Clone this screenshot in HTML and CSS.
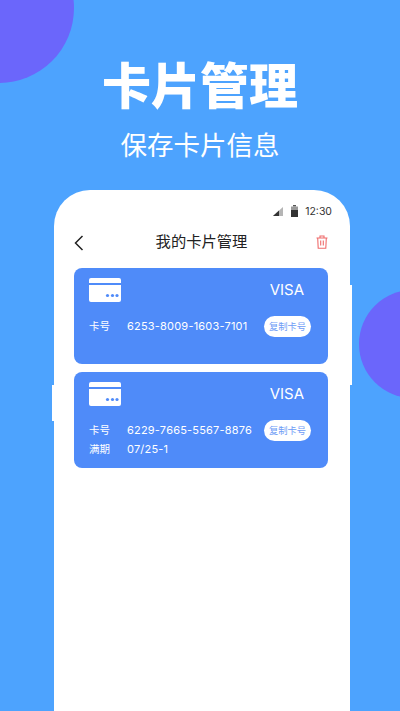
FILE: index.html
```html
<!DOCTYPE html>
<html lang="zh">
<head>
<meta charset="utf-8">
<title>卡片管理</title>
<link rel="stylesheet" href="styles.css">
</head>
<body>
<div class="backdrop">
  <div class="blob blob-top"></div>
  <div class="blob blob-right"></div>
</div>
<header class="hero">
  <h1>卡片管理</h1>
  <p>保存卡片信息</p>
</header>
<main class="phone">
  <span class="side side-left"></span>
  <span class="side side-right"></span>
  <div class="status">
    <svg class="sig" viewBox="0 0 10 10"><path d="M0 10 10 1v9z" fill="#b5b5b5"/><path d="M0 10 6 4.600V10z" fill="#333"/></svg>
    <svg class="bat" viewBox="0 0 7 12"><path d="M2 0h3v1.500H2z" fill="#555"/><path d="M0 1.500h7V5H0z" fill="#999"/><path d="M0 5h7v7H0z" fill="#333"/></svg>
    <span>12:30</span>
  </div>
  <div class="nav">
    <svg class="back" viewBox="0 0 10 16"><path d="M8.500 1 1.500 8l7 7" fill="none" stroke="#222" stroke-width="1.500"/></svg>
    <span class="nav-title">我的卡片管理</span>
    <svg class="trash" viewBox="0 0 12 14"><path d="M.5 3h11M4 3V1h4v2M1.700 3l.5 10.200h7.600l.5-10.200M4.700 5.500v5M7.300 5.500v5" fill="none" stroke="#ef6b6b" stroke-width="1.100"/></svg>
  </div>
  <section class="card">
    <div class="card-top">
      <svg class="card-icon" viewBox="0 0 32 24"><path d="M2 0h28a2 2 0 0 1 2 2v3H0V2a2 2 0 0 1 2-2zM0 7h32v15a2 2 0 0 1-2 2H2a2 2 0 0 1-2-2z" fill="#fff"/><circle cx="18.500" cy="17.500" r="1.600" fill="#4f8bf9"/><circle cx="23.500" cy="17.500" r="1.600" fill="#4f8bf9"/><circle cx="28" cy="17.500" r="1.600" fill="#4f8bf9"/></svg>
      <span class="visa">VISA</span>
    </div>
    <div class="row">
      <span class="label">卡号</span><span class="value">6253-8009-1603-7101</span>
      <button class="copy">复制卡号</button>
    </div>
  </section>
  <section class="card card-second">
    <div class="card-top">
      <svg class="card-icon" viewBox="0 0 32 24"><path d="M2 0h28a2 2 0 0 1 2 2v3H0V2a2 2 0 0 1 2-2zM0 7h32v15a2 2 0 0 1-2 2H2a2 2 0 0 1-2-2z" fill="#fff"/><circle cx="18.500" cy="17.500" r="1.600" fill="#4f8bf9"/><circle cx="23.500" cy="17.500" r="1.600" fill="#4f8bf9"/><circle cx="28" cy="17.500" r="1.600" fill="#4f8bf9"/></svg>
      <span class="visa">VISA</span>
    </div>
    <div class="row">
      <span class="label">卡号</span><span class="value">6229-7665-5567-8876</span>
      <button class="copy">复制卡号</button>
    </div>
    <div class="row row-exp">
      <span class="label">满期</span><span class="value">07/25-1</span>
    </div>
  </section>
</main>
</body>
</html>
```
FILE: styles.css
```css
* { box-sizing: border-box; }
html, body { margin: 0; height: 711px; overflow: hidden; }
body {
  position: relative;
  background: #4da3fe;
  font-family: "Inter", "Noto Sans CJK SC", sans-serif;
  color: #fff;
}
.backdrop { position: absolute; inset: 0; overflow: hidden; }
.blob { position: absolute; border-radius: 50%; background: #6b66fb; }
.blob-top { width: 150px; height: 150px; left: -76px; top: -67px; }
.blob-right { width: 108px; height: 108px; right: -67px; top: 290px; }
.hero { position: relative; text-align: center; height: 190px; padding-top: 53px; }
.hero h1 {
  margin: 0;
  font: 900 49px/60px "Noto Sans CJK SC", sans-serif;
}
.hero p {
  margin: 11px 0 0;
  font: 400 26.500px/40px "Noto Sans CJK SC", sans-serif;
}
.phone {
  position: relative;
  width: 296px;
  height: 521px;
  margin-left: 54px;
  padding: 0 22px 0 20px;
  background: #fff;
  border-radius: 36px 36px 0 0;
}
.side { position: absolute; width: 2px; background: #fff; }
.side-left { left: -2px; top: 195px; height: 36px; }
.side-right { right: -2px; top: 95px; height: 100px; }
.status {
  display: flex;
  justify-content: flex-end;
  align-items: center;
  height: 44px;
  padding-bottom: 2px;
  margin-right: -4px;
  gap: 7px;
  color: #333;
  font-size: 10.500px;
}
.sig { width: 10px; height: 10px; margin-right: 1px; }
.bat { width: 7px; height: 12px; }
.nav { display: flex; align-items: center; justify-content: space-between; height: 17px; }
.back { width: 10px; height: 16px; }
.nav-title { color: #222; font: 400 15.300px/20px "Noto Sans CJK SC", sans-serif; margin: 0 0 5px 3px; }
.trash { width: 12px; height: 14px; margin-bottom: 2px; }
.card {
  height: 96px;
  margin-top: 17px;
  padding: 10px 16px 0 15px;
  background: #4f8bf9;
  border-radius: 8px;
}
.card-second { margin-top: 8px; }
.card-top { display: flex; justify-content: space-between; align-items: flex-start; }
.card-icon { width: 32px; height: 24px; }
.visa { font-size: 15px; line-height: 24px; margin-right: 8px; }
.row { display: flex; align-items: center; height: 22px; margin-top: 13px; font-size: 11px; }
.row-exp { margin-top: -3px; }
.label { width: 38px; font: 400 10.500px/1 "Noto Sans CJK SC", sans-serif; }
.value { width: 137px; letter-spacing: 0.200px; }
.copy {
  width: 47px;
  height: 21px;
  padding: 0;
  border: 0;
  border-radius: 11px;
  background: #fff;
  color: #6f9cf6;
  font: 400 9.300px/21px "Noto Sans CJK SC", sans-serif;
}
```
